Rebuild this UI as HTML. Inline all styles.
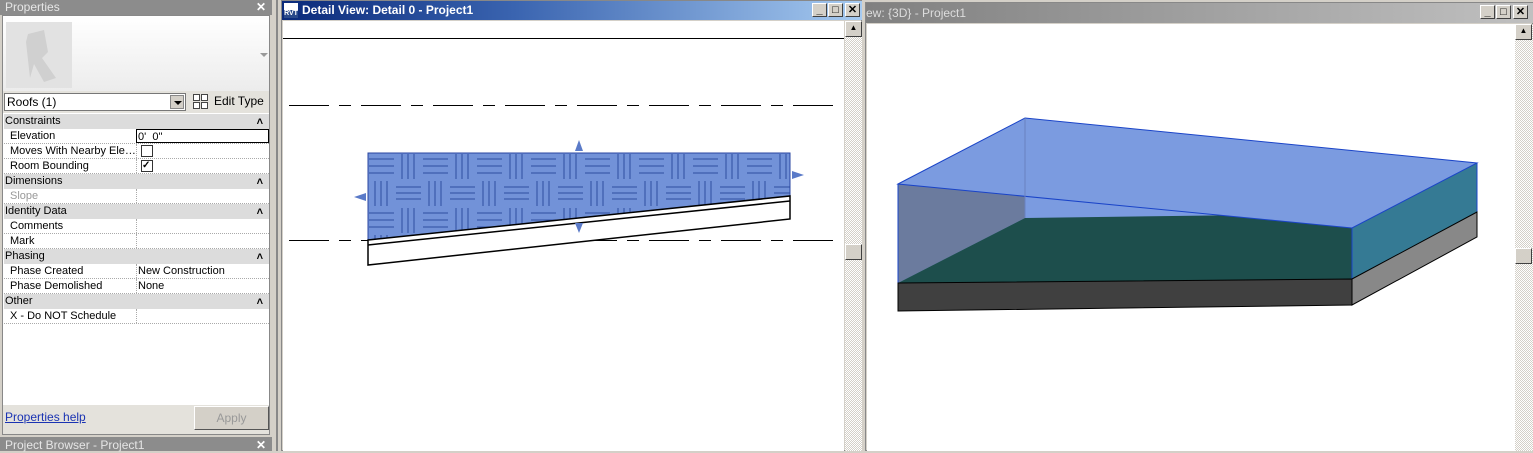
<!DOCTYPE html>
<html><head><meta charset="utf-8"><style>
*{margin:0;padding:0;box-sizing:border-box}
body{width:1533px;height:451px;overflow:hidden;background:#d4d0c8;font-family:"Liberation Sans",sans-serif;font-size:11px;position:relative}
.abs{position:absolute}
.row{position:absolute;left:4px;width:265px;height:15px;line-height:15px;border-bottom:1px dotted #aaa;background:#fff}
.row .k{position:absolute;left:6px}
.row .v{position:absolute;left:132px;top:0;height:14px;border-left:1px dotted #aaa;padding-left:1px;width:133px}
.grp{position:absolute;left:4px;width:265px;height:15px;line-height:15px;background:#dcdcdc;padding-left:1px}
.grp:after{content:"˄";position:absolute;right:6px;top:1px;font-size:11px;font-weight:bold}
.wb{position:absolute;width:15px;height:14px;background:#d4d0c8;border:1px solid;border-color:#fff #404040 #404040 #fff;font-size:11px;line-height:12px;text-align:center;font-weight:bold}
</style></head><body>
<div class="abs" style="left:0;top:0;width:272px;height:15px;background:#8c8c8c;color:#e6e6e6;font-size:12px;line-height:15px;padding-left:5px">Properties<span style="position:absolute;right:6px;color:#fff;font-weight:bold">✕</span></div>
<div class="abs" style="left:2px;top:15px;width:268px;height:420px;background:#fff;border:1px solid #888"></div>
<div class="abs" style="left:3px;top:16px;width:266px;height:75px;background:linear-gradient(#fff,#ececec)"></div>
<div class="abs" style="left:6px;top:22px;width:66px;height:66px;background:#e2e2e2"></div>
<svg class="abs" style="left:6px;top:22px" width="66" height="66"><path d="M22 12 L38 8 L42 30 L36 36 L50 56 L38 60 L28 42 L24 56 L20 20Z" fill="#d0d0d0"/></svg>
<div class="abs" style="left:260px;top:53px;border:4px solid transparent;border-top:4px solid #999"></div>
<div class="abs" style="left:3px;top:91px;width:266px;height:22px;background:#e4e2dc"></div>
<div class="abs" style="left:4px;top:93px;width:182px;height:18px;background:#fff;border:1px solid #777;line-height:16px;padding-left:2px;font-size:12px">Roofs (1)<div class="abs" style="right:1px;top:1px;width:14px;height:14px;background:#d4d0c8;border:1px solid #888"><div class="abs" style="left:3px;top:5px;border:4px solid transparent;border-top:4px solid #000"></div></div></div>
<svg class="abs" style="left:192px;top:93px" width="18" height="17"><g fill="#fff" stroke="#444"><rect x="1.5" y="1.5" width="6" height="6"/><rect x="9.5" y="1.5" width="6" height="6"/><rect x="1.5" y="9.5" width="6" height="6"/><rect x="9.5" y="9.5" width="6" height="6"/></g></svg>
<div class="abs" style="left:214px;top:93px;font-size:12px;line-height:16px">Edit Type</div>
<div class="grp" style="top:114px">Constraints</div>
<div class="row" style="top:129px"><span class="k">Elevation</span><span class="v" style="border:1px solid #000;height:14px;top:0">0'&nbsp; 0"</span></div>
<div class="row" style="top:144px"><span class="k">Moves With Nearby Ele…</span><span class="v"><span class="abs" style="left:4px;top:1px;width:12px;height:12px;border:1px solid #333;background:#fff"></span></span></div>
<div class="row" style="top:159px"><span class="k">Room Bounding</span><span class="v"><span class="abs" style="left:4px;top:1px;width:12px;height:12px;border:1px solid #333;background:#fff;font-size:10px;line-height:10px;font-weight:bold">✓</span></span></div>
<div class="grp" style="top:174px">Dimensions</div>
<div class="row" style="top:189px"><span class="k" style="color:#999">Slope</span><span class="v"></span></div>
<div class="grp" style="top:204px">Identity Data</div>
<div class="row" style="top:219px"><span class="k">Comments</span><span class="v"></span></div>
<div class="row" style="top:234px"><span class="k">Mark</span><span class="v"></span></div>
<div class="grp" style="top:249px">Phasing</div>
<div class="row" style="top:264px"><span class="k">Phase Created</span><span class="v">New Construction</span></div>
<div class="row" style="top:279px"><span class="k">Phase Demolished</span><span class="v">None</span></div>
<div class="grp" style="top:294px">Other</div>
<div class="row" style="top:309px"><span class="k">X - Do NOT Schedule</span><span class="v"></span></div>
<div class="abs" style="left:3px;top:405px;width:266px;height:29px;background:#e4e2dc"></div>
<div class="abs" style="left:5px;top:410px;color:#1a33b3;text-decoration:underline;font-size:12px">Properties help</div>
<div class="abs" style="left:194px;top:406px;width:75px;height:24px;border:1px solid;border-color:#fff #555 #555 #fff;background:#d4d0c8;color:#999;text-align:center;line-height:22px;font-size:12px">Apply</div>
<div class="abs" style="left:0;top:437px;width:272px;height:14px;background:#8c8c8c;color:#e6e6e6;font-size:12px;line-height:16px;padding-left:5px">Project Browser - Project1<span style="position:absolute;right:6px;color:#fff;font-weight:bold">✕</span></div>
<div class="abs" style="left:276px;top:0;width:2px;height:451px;background:#888"></div>

<div class="abs" style="left:281px;top:0;width:581px;height:451px;background:#d4d0c8;border:1px solid #888"></div>
<div class="abs" style="left:282px;top:1px;width:580px;height:19px;background:linear-gradient(90deg,#0a2a7a,#3a64b0 40%,#a6caf0);color:#fff;font-weight:bold;font-size:12px;line-height:19px;padding-left:20px">Detail View: Detail 0 - Project1</div>
<div class="abs" style="left:284px;top:3px;width:14px;height:15px;background:#fff"><div style="background:#2a4a8a;color:#fff;font-size:7px;line-height:8px;margin-top:7px;text-align:center;font-weight:bold">RVT</div></div>
<div class="wb" style="left:812px;top:3px">_</div><div class="wb" style="left:828px;top:3px">□</div><div class="wb" style="left:845px;top:3px">✕</div>
<div class="abs" style="left:283px;top:21px;width:561px;height:430px;background:#fff"></div>
<div class="abs" style="left:845px;top:21px;width:17px;height:430px;background:repeating-conic-gradient(#d4d0c8 0 25%,#fff 0 50%) 0 0/2px 2px"></div>
<div class="wb" style="left:845px;top:21px;width:17px;height:16px;font-size:8px">▲</div>
<div class="wb" style="left:845px;top:244px;width:17px;height:16px"></div>
<svg class="abs" style="left:283px;top:21px" width="561" height="430">
<defs><pattern id="bw" width="54" height="54" patternUnits="userSpaceOnUse" x="85" y="132">
<g stroke="#2f4fa0" stroke-width="1" fill="none">
<path d="M1 6h25M1 13h25M1 20h25M34 1v25M40 1v25M46 1v25M7 28v25M13 28v25M19 28v25M28 34h25M28 40h25M28 46h25"/></g></pattern></defs>
<line x1="0" y1="17.5" x2="561" y2="17.5" stroke="#000"/>
<line x1="6" y1="84.5" x2="558" y2="84.5" stroke="#000" stroke-dasharray="40 10 12 10"/>
<polygon points="85,132 507,132 507,175 85,219" fill="#7292d8"/>
<polygon points="85,132 507,132 507,175 85,219" fill="url(#bw)" stroke="#2844a0"/>
<line x1="6" y1="219.5" x2="558" y2="219.5" stroke="#000" stroke-dasharray="40 10 12 10"/>
<polygon points="85,219 507,175 507,198 85,244" fill="#fff" stroke="#000" stroke-width="1.5"/>
<line x1="85" y1="224" x2="507" y2="180" stroke="#000" stroke-width="1.5"/>
<g fill="#5a7ac8"><polygon points="296,119 292,130 300,130"/><polygon points="296,212 292,202 300,202"/><polygon points="71,176 83,172 83,180"/><polygon points="521,154 509,150 509,158"/></g>
</svg>

<div class="abs" style="left:865px;top:2px;width:668px;height:449px;background:#d4d0c8;border:1px solid #888"></div>
<div class="abs" style="left:866px;top:3px;width:667px;height:20px;background:linear-gradient(90deg,#808080,#c0c0c0);color:#ddd;font-size:12px;line-height:20px;padding-left:0">ew: {3D} - Project1</div>
<div class="wb" style="left:1480px;top:5px">_</div><div class="wb" style="left:1496px;top:5px">□</div><div class="wb" style="left:1513px;top:5px">✕</div>
<div class="abs" style="left:867px;top:24px;width:648px;height:427px;background:#fff"></div>
<div class="abs" style="left:1515px;top:24px;width:18px;height:427px;background:repeating-conic-gradient(#d4d0c8 0 25%,#fff 0 50%) 0 0/2px 2px"></div>
<div class="wb" style="left:1515px;top:24px;width:17px;height:16px;font-size:8px">▲</div>
<div class="wb" style="left:1515px;top:248px;width:17px;height:16px"></div>
<svg class="abs" style="left:0;top:0" width="1515" height="451">
<polygon points="898,184 1352,228 1352,279 898,283" fill="#7b9be0"/>
<polygon points="898,184 1025,118 1025,218 898,283" fill="#6b7b9e"/>
<polygon points="898,283 1025,218 1477,212 1352,279" fill="#1d4e4c"/>
<polygon points="1352,228 1477,163 1477,212 1352,279" fill="#357a94"/>
<polygon points="898,184 1025,118 1477,163 1352,228" fill="#7b9be0" stroke="#1a44c8"/>
<line x1="898" y1="184" x2="898" y2="283" stroke="#1a44c8"/>
<line x1="1352" y1="228" x2="1352" y2="279" stroke="#1a44c8"/>
<line x1="1477" y1="163" x2="1477" y2="212" stroke="#1a44c8"/>
<line x1="1025" y1="118" x2="1025" y2="218" stroke="#6a80c0"/>
<polygon points="898,283 1352,279 1352,305 898,311" fill="#404040" stroke="#000"/>
<polygon points="1352,279 1477,212 1477,237 1352,305" fill="#888" stroke="#000"/>
</svg>
</body></html>
